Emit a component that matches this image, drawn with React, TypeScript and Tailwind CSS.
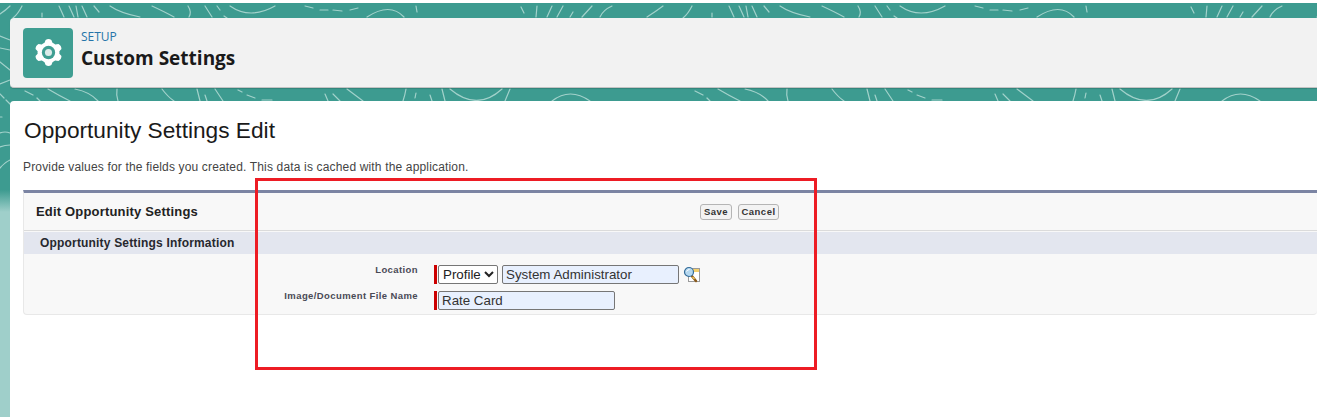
import React from 'react';

const topLines = [
  'M22 6 Q18 14 13 18', 'M42 13 L42 17', 'M59 6 L64 17', 'M69 6 L74 17', 'M76 6 L78 17', 'M82 6 L87 17', 'M94 6 L99 12',
  'M110 6 Q120 13 140 17', 'M152 6 Q165 12 174 17', 'M188 6 Q192 12 189 17', 'M205 6 L212 17', 'M217 6 L220 10',
  'M224 16 L227 18', 'M230 6 Q250 20 275 6', 'M305 6 L313 8', 'M320 10 L328 10', 'M333 10 L342 11', 'M350 10 L358 8',
  'M367 17 Q390 2 404 17', 'M416 6 L417 12', 'M521 7 L524 13', 'M537 6 L536 17', 'M552 6 L547 17', 'M563 6 L557 17',
  'M573 12 L570 17', 'M592 6 L582 17', 'M612 6 Q603 10 600 17', 'M663 6 Q655 12 647 17',
];

const bottomLines = [
  'M25 91 L33 95', 'M37 98 L40 101', 'M48 89 Q58 95 70 101', 'M75 89 Q90 92 98 101', 'M117 89 Q116 95 118 101',
  'M162 89 Q168 97 174 101', 'M197 89 L200 101', 'M205 95 L207 101', 'M215 89 L223 101', 'M238 90 L242 92',
  'M247 95 L255 98', 'M262 100 L272 100', 'M325 94 L328 101', 'M333 94 L340 101', 'M347 89 Q355 95 363 101',
  'M406 89 Q405 95 403 101', 'M416 93 L415 98', 'M430 95 L432 101', 'M442 89 L445 101', 'M450 89 Q477 112 502 89',
  'M510 89 L505 101', 'M552 101 Q570 87 590 101',
];

const sideLines = [
  'M0 14 Q6 10 10 6', 'M0 36 L10 40', 'M0 48 L10 50', 'M0 62 Q5 66 10 70', 'M0 84 L10 80', 'M0 94 L4 98',
  'M6 100 L10 104', 'M0 117 L2 117', 'M0 133 Q5 131 10 133', 'M0 147 Q5 145 10 145', 'M0 168 Q5 162 10 160',
];

const BackgroundLines = () => (
  <svg className="absolute inset-0 h-full w-full" aria-hidden="true">
    {[0, 670].map((offset) => (
      <g key={offset} transform={`translate(${offset} 0)`} fill="none" stroke="#b5dcd6" strokeWidth="1.2" strokeLinecap="round" opacity="0.85">
        {topLines.concat(bottomLines).map((d) => (
          <path key={d} d={d} />
        ))}
      </g>
    ))}
    <g fill="none" stroke="#b5dcd6" strokeWidth="1.2" strokeLinecap="round" opacity="0.85">
      {sideLines.map((d) => (
        <path key={d} d={d} />
      ))}
    </g>
  </svg>
);

const GearIcon = () => (
  <svg width="31" height="31" viewBox="0 0 28 28" aria-hidden="true">
    <path
      fill="#fff"
      d="M11.4 2.6 Q14 1 16.6 2.6 L17.6 5.3 Q19 5.9 20.1 6.7 L23 6.3 Q25.7 7.7 25.7 10.8 L23.8 12.8 Q24 14 23.8 15.2 L25.7 17.2 Q25.7 20.3 23 21.7 L20.1 21.3 Q19 22.1 17.6 22.7 L16.6 25.4 Q14 27 11.4 25.4 L10.4 22.7 Q9 22.1 7.9 21.3 L5 21.7 Q2.3 20.3 2.3 17.2 L4.2 15.2 Q4 14 4.2 12.8 L2.3 10.8 Q2.3 7.7 5 6.3 L7.9 6.7 Q9 5.9 10.4 5.3 Z"
    />
    <circle cx="14" cy="14" r="6" fill="#3f9e92" />
    <circle cx="14" cy="14" r="3.2" fill="#dcebe9" />
  </svg>
);

const LookupIcon = () => (
  <svg width="18" height="18" viewBox="0 0 18 18" aria-hidden="true">
    <rect x="5.5" y="2.5" width="11" height="13" fill="#fff" stroke="#9a9a9a" />
    <rect x="6" y="3" width="10" height="3" fill="#f4cf6b" />
    <path d="M8 9 L13 15" stroke="#8a5a1c" strokeWidth="2.5" strokeLinecap="round" />
    <path d="M9.5 11 L11.5 13" stroke="#f2c75a" strokeWidth="1.5" />
    <circle cx="6" cy="6" r="4.5" fill="#b5d8f0" stroke="#356d9a" strokeWidth="1.2" />
    <path d="M3.5 5.5 Q4.5 3.5 6.5 3.5" fill="none" stroke="#fff" strokeWidth="1" />
  </svg>
);

const ActionButton = ({ label, width }: { label: string; width: string }) => (
  <button className={`h-4 ${width} rounded-[3px] border border-[#b5b5b5] bg-[#f3f3f3] text-[9.5px] font-bold leading-none tracking-[0.5px] text-[#333]`}>
    {label}
  </button>
);

const FormRow = ({ label, children }: { label: string; children: React.ReactNode }) => (
  <div className="flex h-[19px] items-center">
    <label className="w-[394px] pb-[9px] text-right text-[9.5px] font-bold leading-[10px] tracking-[0.4px] text-[#4a4a56]">{label}</label>
    <div className="ml-4 flex h-full items-center">
      <span className="mr-px h-full w-[3px] bg-[#cc0000]" />
      {children}
    </div>
  </div>
);

export default function App() {
  return (
    <div className="h-[417px] w-[1317px] overflow-hidden bg-white pt-[3px] font-['Liberation_Sans',Arial,sans-serif]">
      <div className="relative h-[414px] bg-[linear-gradient(#3d9b90_0px,#3d9b90_187px,#9fcfca_209px,#9fcfca_100%)]">
        <div className="absolute left-0 top-[-3px] h-[417px] w-full">
          <BackgroundLines />
        </div>

        <div className="relative ml-[10px] pt-[15px]">
          <div className="flex h-[70px] items-center rounded-l-[4px] border-b border-[#c4c4c4] bg-[#f2f2f2] pl-[13px] shadow-[0_1px_1px_rgba(0,0,0,0.15)]">
            <div className="flex h-[50px] w-[50px] items-center justify-center rounded-[4px] bg-[#3f9e92]">
              <GearIcon />
            </div>
            <div className="ml-2 pb-[5px] font-['Open_Sans',sans-serif]">
              <div className="text-[12px] leading-[16px] text-[#2574a9]">SETUP</div>
              <div className="text-[19px] font-bold leading-[26px] text-[#1a1a1a]">Custom Settings</div>
            </div>
          </div>

          <div className="mt-[13px] h-[316px] rounded-tl-[4px] bg-white pl-[13px] pt-[14px]">
            <h1 className="pl-px text-[22.7px] leading-[30px] text-[#1a1a1a]">Opportunity Settings Edit</h1>
            <p className="mt-[14px] text-[12px] leading-[16px] tracking-[0.16px] text-[#444]">
              Provide values for the fields you created. This data is cached with the application.
            </p>

            <div className="mt-[15px] rounded-b-[4px] border-b border-l border-t-[3px] border-[#e8e8e8] border-t-[#7b84a3] bg-[#f8f8f8]">
              <div className="flex h-[38px] items-center border-b border-[#dbdbdb] pl-3">
                <h2 className="w-[664px] text-[13px] font-bold tracking-[0.18px] text-[#222]">Edit Opportunity Settings</h2>
                <div className="flex gap-[6px]">
                  <ActionButton label="Save" width="w-8" />
                  <ActionButton label="Cancel" width="w-[41px]" />
                </div>
              </div>
              <div className="mt-px flex h-[22px] items-center bg-[#e3e6ef] pl-4 text-[12px] font-bold tracking-[0.18px] text-[#27282e]">
                Opportunity Settings Information
              </div>
              <div className="flex h-[60px] flex-col gap-[7px] pt-[11px]">
                <FormRow label="Location">
                  <select className="h-[19px] w-[60px] appearance-auto rounded-[2px] border border-[#767676] bg-white text-[13.33px] text-[#222]">
                    <option>Profile</option>
                  </select>
                  <input
                    readOnly
                    value="System Administrator"
                    className="ml-1 h-[19px] w-[177px] rounded-[2px] border border-[#767676] bg-[#e8f0fe] px-[3px] text-[13.33px] text-[#333]"
                  />
                  <span className="ml-1 flex">
                    <LookupIcon />
                  </span>
                </FormRow>
                <FormRow label="Image/Document File Name">
                  <input
                    readOnly
                    value="Rate Card"
                    className="h-[19px] w-[177px] rounded-[2px] border border-[#767676] bg-[#e8f0fe] px-[3px] text-[13.33px] text-[#333]"
                  />
                </FormRow>
              </div>
            </div>
          </div>
        </div>
      </div>

      {/* annotation drawn over the screenshot */}
      <div className="pointer-events-none absolute left-[255px] top-[178px] h-[192px] w-[562px] border-[3px] border-[#ed1c24]" />
    </div>
  );
}
